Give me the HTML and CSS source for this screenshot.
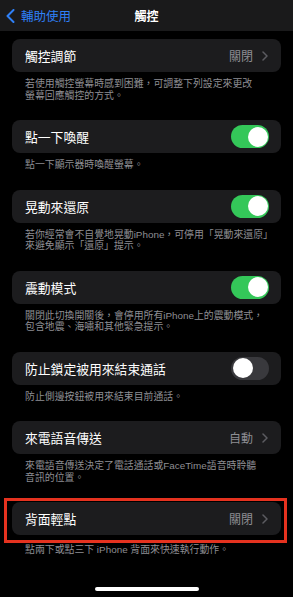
FILE: index.html
```html
<!DOCTYPE html>
<html lang="zh-Hant">
<head>
<meta charset="utf-8">
<title>觸控</title>
<link rel="stylesheet" href="styles.css">
</head>
<body>
<div class="screen">
  <header class="navbar">
    <div class="back">
      <svg class="back-chevron" width="9" height="14" viewBox="0 0 9 14"><polyline points="7.5,1 1.5,7 7.5,13" fill="none" stroke="#2f80f7" stroke-width="2" stroke-linecap="round" stroke-linejoin="round"/></svg>
      <span class="back-label">輔助使用</span>
    </div>
    <div class="title">觸控</div>
    <div class="nav-spacer"></div>
  </header>

  <main class="list">
    <section class="group">
      <div class="card">
        <span class="label">觸控調節</span>
        <span class="value">關閉</span>
        <svg class="chevron" width="6" height="10" viewBox="0 0 6 10"><polyline points="1,1 5,5 1,9" fill="none" stroke="#5c5c61" stroke-width="1.5" stroke-linecap="round" stroke-linejoin="round"/></svg>
      </div>
      <p class="footer">若使用觸控螢幕時感到困難，可調整下列設定來更改<br>螢幕回應觸控的方式。</p>
    </section>

    <section class="group">
      <div class="card">
        <span class="label">點一下喚醒</span>
        <span class="toggle on"><span class="knob"></span></span>
      </div>
      <p class="footer">點一下顯示器時喚醒螢幕。</p>
    </section>

    <section class="group">
      <div class="card">
        <span class="label">晃動來還原</span>
        <span class="toggle on"><span class="knob"></span></span>
      </div>
      <p class="footer">若你經常會不自覺地晃動iPhone，可停用「晃動來還原」<br>來避免顯示「還原」提示。</p>
    </section>

    <section class="group">
      <div class="card">
        <span class="label">震動模式</span>
        <span class="toggle on"><span class="knob"></span></span>
      </div>
      <p class="footer">關閉此切換開關後，會停用所有iPhone上的震動模式，<br>包含地震、海嘯和其他緊急提示。</p>
    </section>

    <section class="group">
      <div class="card">
        <span class="label">防止鎖定被用來結束通話</span>
        <span class="toggle"><span class="knob"></span></span>
      </div>
      <p class="footer">防止側邊按鈕被用來結束目前通話。</p>
    </section>

    <section class="group">
      <div class="card">
        <span class="label">來電語音傳送</span>
        <span class="value">自動</span>
        <svg class="chevron" width="6" height="10" viewBox="0 0 6 10"><polyline points="1,1 5,5 1,9" fill="none" stroke="#5c5c61" stroke-width="1.5" stroke-linecap="round" stroke-linejoin="round"/></svg>
      </div>
      <p class="footer">來電語音傳送決定了電話通話或FaceTime語音時聆聽<br>音訊的位置。</p>
    </section>

    <section class="group">
      <div class="card highlighted">
        <span class="label">背面輕點</span>
        <span class="value">關閉</span>
        <svg class="chevron" width="6" height="10" viewBox="0 0 6 10"><polyline points="1,1 5,5 1,9" fill="none" stroke="#5c5c61" stroke-width="1.5" stroke-linecap="round" stroke-linejoin="round"/></svg>
      </div>
      <p class="footer after-highlight">點兩下或點三下 iPhone 背面來快速執行動作。</p>
    </section>
  </main>

  <div class="home-indicator"></div>
</div>
</body>
</html>
```

FILE: styles.css
```css
html, body {
  margin: 0;
  padding: 0;
  background: #000;
}

body {
  font-family: "Noto Sans CJK TC", "Noto Sans", sans-serif;
  color: #fff;
  width: 293px;
  height: 597px;
  overflow: hidden;
}

.screen {
  display: flex;
  flex-direction: column;
  height: 597px;
}

.navbar {
  height: 31px;
  background: #1a1a1b;
  display: grid;
  grid-template-columns: 1fr auto 1fr;
  align-items: center;
  padding: 0 0 0 6px;
}

.back {
  display: flex;
  align-items: center;
  gap: 6px;
}

.back-chevron {
  display: block;
}

.back-label {
  font-size: 12.5px;
  line-height: 14px;
  color: #2f80f7;
}

.title {
  font-size: 12px;
  font-weight: 700;
  line-height: 14px;
  margin-right: 6px;
}

.list {
  padding: 8px 12px 0 12px;
}

.group {
  margin: 0;
}

.card {
  height: 33px;
  background: #1c1c1e;
  border-radius: 8px;
  display: flex;
  align-items: center;
  padding: 0 12px 0 13px;
}

.label {
  font-size: 12.8px;
  line-height: 15px;
  flex: 1;
  white-space: nowrap;
}

.value {
  font-size: 12px;
  line-height: 14px;
  color: #8e8e93;
  margin-right: 9px;
}

.chevron {
  display: block;
  margin-right: 1px;
}

.toggle {
  width: 38px;
  height: 23px;
  border-radius: 11.5px;
  background: #39393d;
  display: flex;
  align-items: center;
  padding: 0 1.5px;
  box-sizing: border-box;
}

.toggle.on {
  background: #34c759;
  justify-content: flex-end;
}

.knob {
  width: 20px;
  height: 20px;
  border-radius: 50%;
  background: #fff;
}

.footer {
  margin: 0;
  padding: 6px 0 19px 13px;
  font-family: "Liberation Sans", "Noto Sans CJK TC", sans-serif;
  font-size: 9.9px;
  line-height: 11.5px;
  color: #8e8e93;
  white-space: nowrap;
}

.highlighted {
  position: relative;
}

.highlighted::after {
  content: "";
  position: absolute;
  top: -4px;
  left: -8px;
  right: -6px;
  bottom: -8px;
  border: 3px solid #e5321f;
}

.footer.after-highlight {
  padding-top: 9px;
}

.home-indicator {
  margin: auto auto 6px auto;
  width: 104px;
  height: 4px;
  border-radius: 2px;
  background: #fff;
}
```
